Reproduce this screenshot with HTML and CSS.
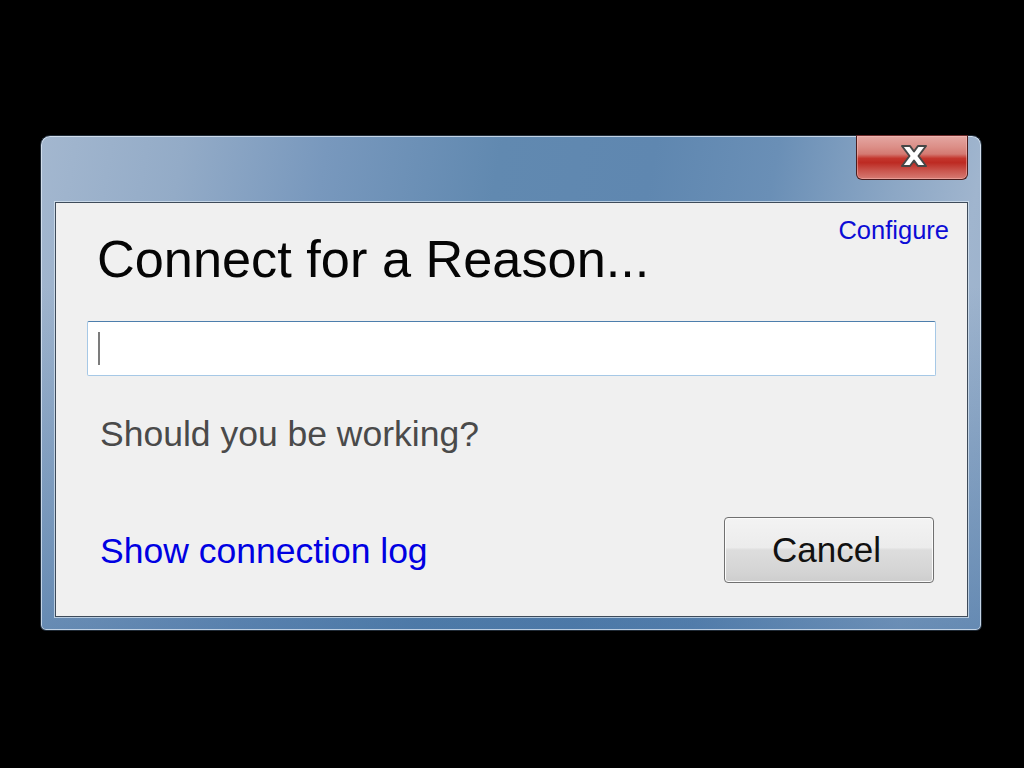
FILE: index.html
```html
<!DOCTYPE html>
<html lang="en">
<head>
<meta charset="utf-8">
<title>Connect for a Reason</title>
<link rel="stylesheet" href="styles.css">
</head>
<body>
  <div class="window">
    <div class="titlebar">
      <div class="close-btn">
        <svg class="close-x" width="28" height="24" viewBox="0 0 28 24" aria-hidden="true">
          <polygon points="2,2 10,2 14,7.5 18,2 26,2 18.5,12 26,22 18,22 14,16.5 10,22 2,22 9.5,12" fill="#ffffff" stroke="#474747" stroke-width="2" stroke-linejoin="round"/>
        </svg>
      </div>
    </div>
    <div class="panel">
      <div class="top-row">
        <h1 class="title">Connect for a Reason...</h1>
        <a class="configure" href="#">Configure</a>
      </div>
      <div class="reason-input"><span class="caret"></span></div>
      <p class="question">Should you be working?</p>
      <div class="spacer"></div>
      <div class="bottom-row">
        <a class="log-link" href="#">Show connection log</a>
        <button class="cancel-btn" type="button">Cancel</button>
      </div>
    </div>
  </div>
</body>
</html>
```

FILE: styles.css
```css
* { box-sizing: border-box; }

html, body {
  margin: 0;
  padding: 0;
  background: #000;
  height: 100%;
  overflow: hidden;
}

body {
  font-family: "Liberation Sans", Arial, sans-serif;
}

.window {
  width: 942px;
  height: 496px;
  margin: 135px 0 0 40px;
  border-radius: 10px 10px 6px 6px;
  border: 1px solid #1f2a36;
  box-shadow: inset 0 0 0 1px rgba(225, 235, 245, 0.75);
  background:
    linear-gradient(to bottom, rgba(255,255,255,0) 0px, rgba(255,255,255,0) 150px, rgba(60, 108, 160, 0.55) 100%),
    linear-gradient(100deg, #a3b7cf 0%, #93abc7 14%, #7898bd 28%, #6189b0 45%, #5f87b0 60%, #6a8fb6 72%, #8ca7c5 84%, #a0b5ce 92%, #98afca 100%);
  display: flex;
  flex-direction: column;
}

.titlebar {
  height: 66px;
  display: flex;
  justify-content: flex-end;
  align-items: flex-start;
  padding-right: 13px;
}

.close-btn {
  width: 112px;
  height: 45px;
  margin-top: -1px;
  border: 1px solid #4b1d1d;
  border-top-color: #6a2a2a;
  border-radius: 0 0 6px 6px;
  background: linear-gradient(to bottom, #e4a7a2 0%, #dc8f88 25%, #d47a72 42%, #c4362d 52%, #bd2a22 62%, #c9544c 80%, #d67b73 100%);
  box-shadow: inset 0 0 0 1px rgba(255, 200, 195, 0.45);
  display: flex;
  justify-content: center;
  align-items: center;
  padding-left: 3px;
}

.close-x {
  display: block;
  margin-top: -3px;
}

.panel {
  height: 415px;
  margin: 0 13px 0 14px;
  background: #f0f0f0;
  border: 1px solid #3e4b5a;
  box-shadow: 0 0 0 1px rgba(220, 232, 244, 0.7);
  display: flex;
  flex-direction: column;
  padding: 0 31px 33px 31px;
}

.top-row {
  display: flex;
  justify-content: space-between;
  align-items: flex-start;
  margin-right: -13px;
}

.title {
  margin: 26px 0 0 10px;
  font-size: 52.3px;
  line-height: 60px;
  font-weight: normal;
  color: #050505;
  letter-spacing: 0;
}

.configure {
  margin-top: 13px;
  font-size: 25.5px;
  line-height: 29px;
  color: #0c0cd6;
  text-decoration: none;
}

.reason-input {
  margin-top: 32px;
  height: 55px;
  background: #fff;
  border: 1px solid #a6c8e6;
  border-top-color: #4d7eac;
  border-radius: 2px;
  display: flex;
  align-items: center;
  padding-left: 10px;
}

.caret {
  display: block;
  width: 2px;
  height: 33px;
  background: #7c7c7c;
}

.question {
  margin: 38px 0 0 13px;
  font-size: 35.5px;
  line-height: 41px;
  color: #4a4a4a;
}

.spacer { flex: 1; }

.bottom-row {
  display: flex;
  justify-content: space-between;
  align-items: center;
  padding-left: 13px;
  margin-right: 2px;
}

.log-link {
  font-size: 35.5px;
  line-height: 41px;
  margin-top: 2px;
  color: #0000e2;
  text-decoration: none;
}

.cancel-btn {
  width: 210px;
  height: 66px;
  font-family: "Liberation Sans", Arial, sans-serif;
  font-size: 35px;
  color: #111;
  border: 1px solid #707070;
  border-radius: 4px;
  background: linear-gradient(to bottom, #f3f3f3 0%, #ececec 46%, #dddddd 50%, #d4d4d4 85%, #cdcdcd 100%);
  box-shadow: inset 0 0 0 1px #fbfbfb;
  padding: 0 5px 0 0;
}
```
